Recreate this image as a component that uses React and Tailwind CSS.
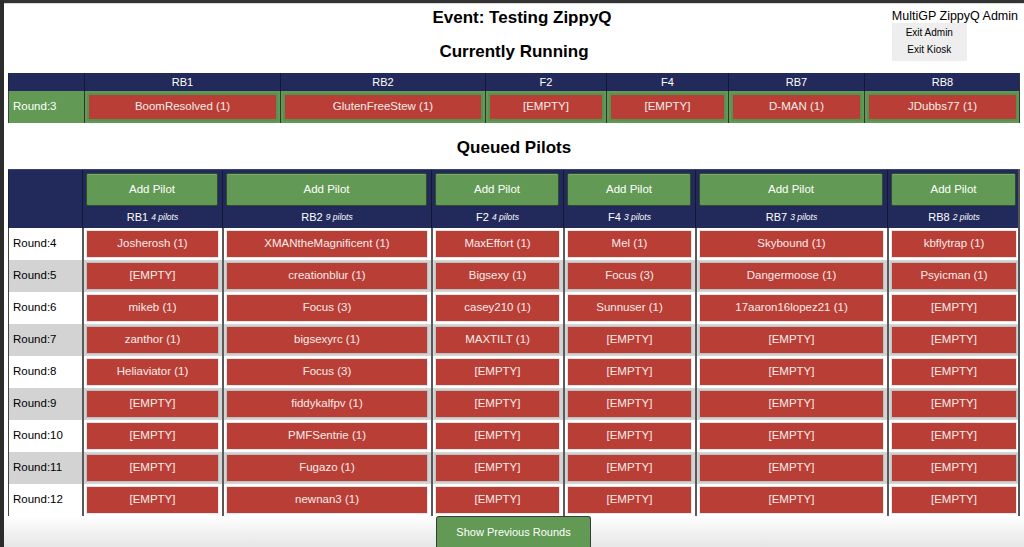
import React from 'react'

const current = [
  ['RB1', 'BoomResolved (1)'],
  ['RB2', 'GlutenFreeStew (1)'],
  ['F2', '[EMPTY]'],
  ['F4', '[EMPTY]'],
  ['RB7', 'D-MAN (1)'],
  ['RB8', 'JDubbs77 (1)'],
]

const channels = [
  ['RB1', '4 pilots'],
  ['RB2', '9 pilots'],
  ['F2', '4 pilots'],
  ['F4', '3 pilots'],
  ['RB7', '3 pilots'],
  ['RB8', '2 pilots'],
]

const E = '[EMPTY]'
const rounds = [
  [4, ['Josherosh (1)', 'XMANtheMagnificent (1)', 'MaxEffort (1)', 'Mel (1)', 'Skybound (1)', 'kbflytrap (1)']],
  [5, [E, 'creationblur (1)', 'Bigsexy (1)', 'Focus (3)', 'Dangermoose (1)', 'Psyicman (1)']],
  [6, ['mikeb (1)', 'Focus (3)', 'casey210 (1)', 'Sunnuser (1)', '17aaron16lopez21 (1)', E]],
  [7, ['zanthor (1)', 'bigsexyrc (1)', 'MAXTILT (1)', E, E, E]],
  [8, ['Heliaviator (1)', 'Focus (3)', E, E, E, E]],
  [9, [E, 'fiddykalfpv (1)', E, E, E, E]],
  [10, [E, 'PMFSentrie (1)', E, E, E, E]],
  [11, [E, 'Fugazo (1)', E, E, E, E]],
  [12, [E, 'newnan3 (1)', E, E, E, E]],
]

const curCols = 'grid grid-cols-[76px_196px_205px_121px_122px_136px_156px]'
const qCols = 'grid grid-cols-[74px_140px_209px_132px_132px_192px_133px]'

function RedCell({ children, frame = 'border-white' }) {
  return (
    <div
      className={`h-full flex items-center justify-center bg-[#b93e36] border ${frame} text-[11.5px] text-[#f6ecea]`}
    >
      {children}
    </div>
  )
}

export default function App() {
  return (
    <div
      className="min-h-[547px] bg-white border-l-[4px] border-[#2c2c2c] text-black"
      style={{ fontFamily: '"Liberation Sans", Arial, sans-serif' }}
    >
      <div className="h-[4px] bg-[#333] border-b border-[#d8d8d8]" />

      <div className="relative">
        <div className="absolute right-[6px] top-[5px] flex flex-col items-start">
          <span className="text-[12.5px] leading-[15px]">MultiGP ZippyQ Admin</span>
          <div className="flex flex-col w-[75px] bg-[#eeeeee] text-[10px] items-center pt-[1px] pb-[3px] -mt-[1px]">
            <span className="leading-[17px]">Exit Admin</span>
            <span className="leading-[17px]">Exit Kiosk</span>
          </div>
        </div>

        <h1 className="text-center text-[17px] font-bold leading-[20px] pt-[4px] pl-[16px]">Event: Testing ZippyQ</h1>
        <h2 className="text-center text-[17px] font-bold leading-[20px] mt-[14px]">Currently Running</h2>

        <div className="mx-[4px] mt-[11px] border-r border-[#333]">
          <div className={`${curCols} h-[18px] bg-[#222a5b] text-white text-[11px]`}>
            <div className="border-l border-[#1a1f40]" />
            {current.map(([ch]) => (
              <div key={ch} className="flex items-center justify-center border-l border-[#141833]">
                {ch}
              </div>
            ))}
          </div>
          <div className={`${curCols} h-[32px] bg-[#629a55]`}>
            <div className="flex items-center pl-[4px] text-white text-[11.5px] border-l border-[#444]">Round:3</div>
            {current.map(([ch, p]) => (
              <div key={ch} className="p-[2px] border-l border-[#333]">
                <RedCell frame="border-[#5a9050] border-[2px]">{p}</RedCell>
              </div>
            ))}
          </div>
        </div>

        <h2 className="text-center text-[17px] font-bold leading-[20px] mt-[15px]">Queued Pilots</h2>

        <div className="mx-[4px] mt-[11px] border-r-2 border-[#555]">
          <div className={`${qCols} bg-[#222a5b] border-t border-[#3a4270]`}>
            <div className="border-l border-[#1a1f40]" />
            {channels.map(([ch, n]) => (
              <div key={ch} className="flex flex-col border-l border-[#141833]">
                <div className="pt-[3px] pl-[3px] pr-[4px]">
                  <button className="w-full h-[33px] bg-[#629a55] border border-[#2f4d2a] rounded-[2px] text-white text-[11.5px] shadow-[inset_0_1px_0_rgba(255,255,255,0.15)]">
                    Add Pilot
                  </button>
                </div>
                <div className="h-[22px] flex items-center justify-center gap-[3px] text-white">
                  <span className="text-[11px]">{ch}</span>
                  <span className="text-[8.5px] italic">{n}</span>
                </div>
              </div>
            ))}
          </div>
          {rounds.map(([r, pilots], i) => {
            const alt = i % 2 === 1
            return (
              <div key={r} className={`${qCols} h-[32px] ${alt ? 'bg-[#d3d3d3]' : 'bg-white'}`}>
                <div className="flex items-center pl-[4px] text-[11.5px] border-l border-[#444]">Round:{r}</div>
                {pilots.map((p, j) => (
                  <div key={j} className="py-[2px] pl-[2px] pr-[3px] border-l-2 border-[#5a5a5a]">
                    <RedCell frame={alt ? 'border-[#bfbfbf]' : 'border-[#e8e8e8]'}>{p}</RedCell>
                  </div>
                ))}
              </div>
            )
          })}
        </div>

        <div className="h-[31px] bg-gradient-to-b from-white to-[#e6e6e6] flex justify-center">
          <button className="w-[155px] h-[31px] bg-[#629a55] border border-[#3b3b3b] border-b-0 rounded-t-[3px] text-white text-[11px] -ml-[1px]">
            Show Previous Rounds
          </button>
        </div>
      </div>
    </div>
  )
}
